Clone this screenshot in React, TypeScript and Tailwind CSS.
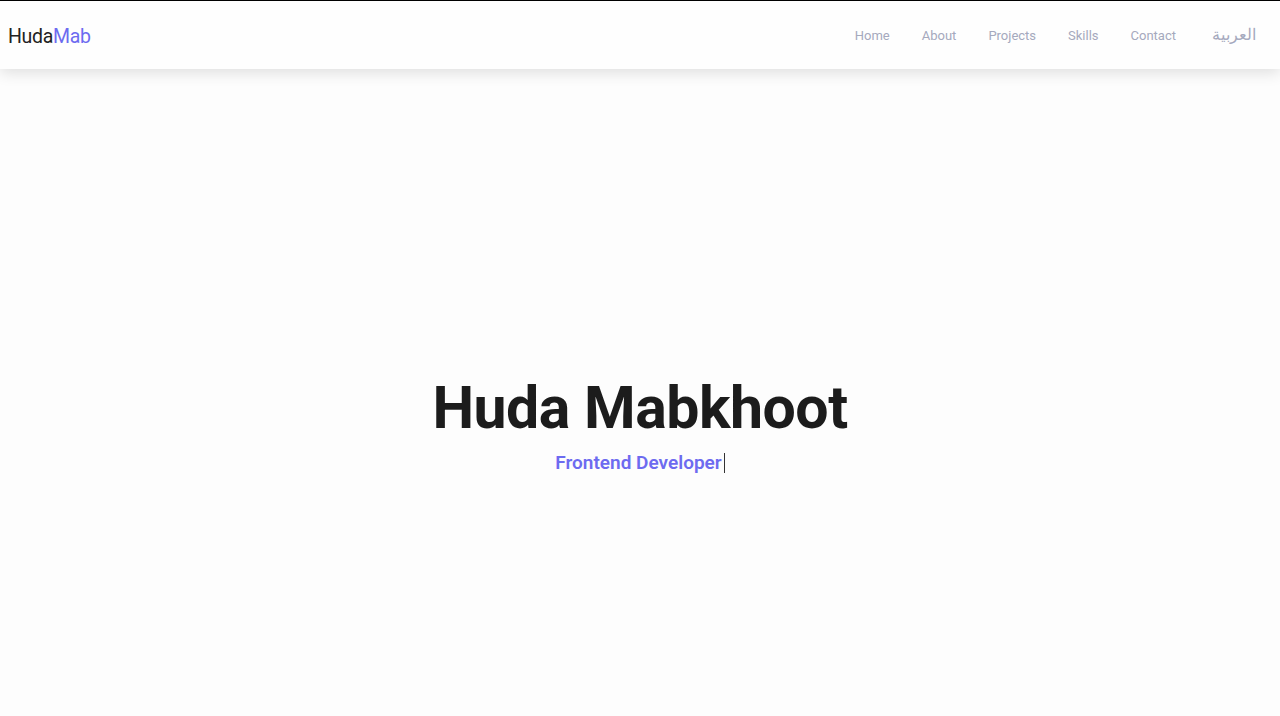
const links = ["Home", "About", "Projects", "Skills", "Contact"];

const App = () => {
  return (
    <div
      className="h-screen overflow-hidden bg-[#fdfdfd] border-t border-black"
      style={{ fontFamily: 'Roboto, "Noto Sans", sans-serif' }}
    >
      <header className="h-[68px] bg-[#fefefe] shadow-[0_4px_14px_rgba(0,0,0,0.12)] flex items-center justify-between pl-2 pr-6 relative z-10">
        <a className="text-[19.5px] tracking-[-0.3px] text-[#222] pt-1">
          Huda<span className="text-[#6d6bf0]">Mab</span>
        </a>
        <nav className="flex items-center gap-8 text-[13px] text-[#a5a9bd] pt-[2px]">
          {links.map((l) => (
            <a key={l}>{l}</a>
          ))}
          <button className="ml-1 text-[15.5px] text-[#a5a9bd]">العربية</button>
        </nav>
      </header>

      <section className="h-[716px] flex flex-col items-center justify-center">
        <h1 className="text-[59px] font-bold leading-[1.1] text-[#1c1c1c] tracking-[-0.5px]">
          Huda Mabkhoot
        </h1>
        <p className="mt-[8px] text-[19px] font-semibold text-[#6d6bf0] flex items-center">
          Frontend Developer
          <span className="ml-[2px] inline-block w-px h-[20px] bg-[#333]" />
        </p>
      </section>
    </div>
  );
};

export default App;
